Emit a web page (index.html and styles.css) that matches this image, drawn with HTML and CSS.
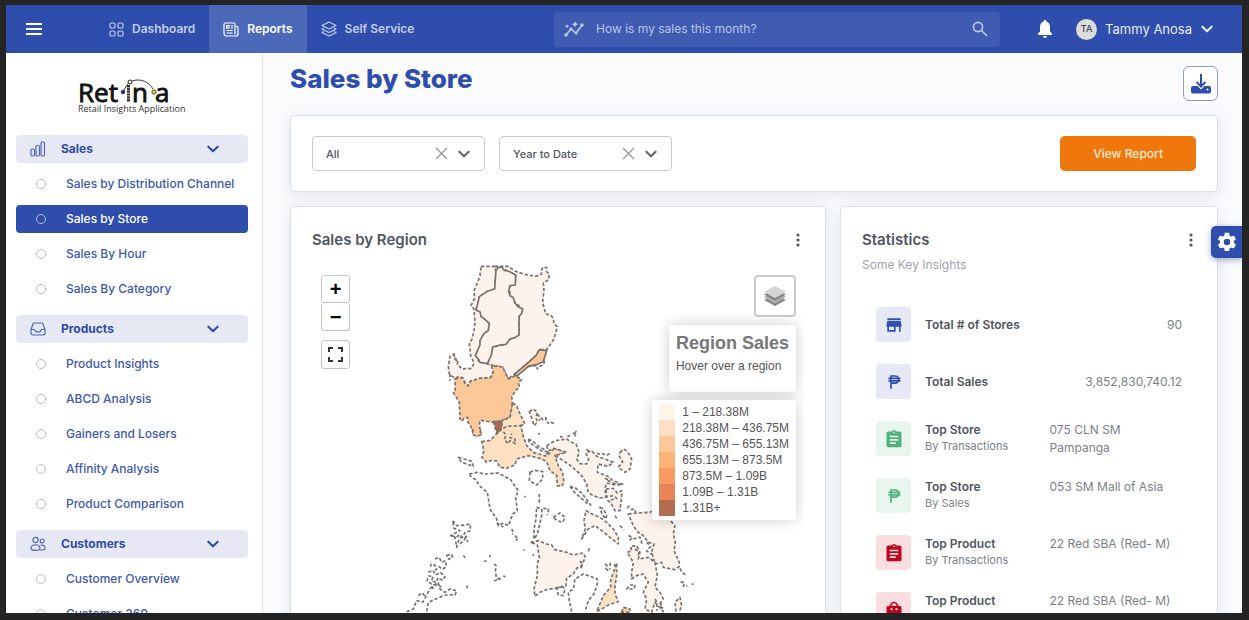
FILE: index.html
```html
<!DOCTYPE html>
<html lang="en">
<head>
<meta charset="utf-8">
<meta name="viewport" content="width=device-width, initial-scale=1">
<title>Retina - Sales by Store</title>
<link rel="stylesheet" href="styles.css">
</head>
<body>
<svg class="defs" aria-hidden="true">
  <symbol id="chev" viewBox="0 0 12 12"><path d="M2 4l4 4 4-4" fill="none" stroke="currentColor" stroke-width="1.8" stroke-linecap="round" stroke-linejoin="round"/></symbol>
  <symbol id="peso" viewBox="0 0 24 24"><path d="M8 21V4h5.500a4.800 4.800 0 0 1 0 9.600H8M4.500 7.300h16M4.500 10.500h16" fill="none" stroke="currentColor" stroke-width="2.300"/></symbol>
  <symbol id="clip" viewBox="0 0 24 24"><path fill="currentColor" d="M19 3h-4.200a3 3 0 0 0-5.600 0H5a2 2 0 0 0-2 2v15a2 2 0 0 0 2 2h14a2 2 0 0 0 2-2V5a2 2 0 0 0-2-2zm-7 0a1 1 0 1 1 0 2 1 1 0 0 1 0-2zm2 15H7v-2h7zm3-4H7v-2h10zm0-4H7V8h10z"/></symbol>
  <symbol id="dots" viewBox="0 0 6 16"><g fill="currentColor"><circle cx="3" cy="3" r="1.600"/><circle cx="3" cy="8" r="1.600"/><circle cx="3" cy="13" r="1.600"/></g></symbol>
</svg>
<div class="app">
  <header class="topbar">
    <button class="icon-btn burger" aria-label="Toggle menu"><svg width="16" height="12" viewBox="0 0 16 12"><path d="M0 1h16M0 6h16M0 11h16" stroke="currentColor" stroke-width="1.800"/></svg></button>
    <nav class="tabs">
      <a class="tab" href="#"><svg width="15" height="15" viewBox="0 0 15 15" fill="none" stroke="currentColor" stroke-width="1.200"><rect x="1" y="1" width="5" height="5" rx="1.600"/><rect x="9" y="1" width="5" height="5" rx="1.600"/><rect x="1" y="9" width="5" height="5" rx="1.600"/><rect x="9" y="9" width="5" height="5" rx="1.600"/></svg>Dashboard</a>
      <a class="tab active" href="#"><svg width="16" height="15" viewBox="0 0 16 15" fill="none" stroke="currentColor" stroke-width="1.200"><path d="M12 12.500V2.500a1.500 1.500 0 0 0-1.500-1.500h-8A1.500 1.500 0 0 0 1 2.500v9A2.500 2.500 0 0 0 3.500 14H13a2 2 0 0 0 2-2V5.500a1 1 0 0 0-1-1h-2M3.500 8.500h6M3.500 11h6M8 3.800h2M8 6h2"/><rect x="3.600" y="3.600" width="2.400" height="2.400"/></svg>Reports</a>
      <a class="tab" href="#"><svg width="16" height="16" viewBox="0 0 16 16" fill="none" stroke="currentColor" stroke-width="1.200" stroke-linejoin="round"><path d="M8 1l7 3.500L8 8 1 4.500zM3 7L1 8l7 3.500L15 8l-2-1M3 10.500l-2 1L8 15l7-3.500-2-1"/></svg>Self Service</a>
    </nav>
    <form class="search" role="search">
      <svg width="20" height="16" viewBox="0 0 20 16" fill="none" stroke="currentColor" stroke-width="1.600"><path d="M2 14l5-6 5 4 6-8"/><g fill="currentColor" stroke="none"><circle cx="2" cy="14" r="1.700"/><circle cx="7" cy="8" r="1.600"/><circle cx="12" cy="12" r="1.600"/><circle cx="18" cy="4" r="1.700"/><path d="M11 0l1 2.300 2.300 1-2.300 1-1 2.300-1-2.300-2.300-1 2.300-1zM3 3l.7 1.500 1.500.7-1.500.7L3 7.400l-.7-1.500-1.500-.7 1.500-.7z"/></g></svg>
      <input type="text" aria-label="Search" placeholder="How is my sales this month?">
      <button class="icon-btn" type="button" aria-label="Search"><svg width="16" height="16" viewBox="0 0 16 16" fill="none" stroke="currentColor" stroke-width="1.600"><circle cx="6" cy="6" r="4.600"/><path d="M9.500 9.500L15 15"/></svg></button>
    </form>
    <div class="account">
      <button class="icon-btn bell" aria-label="Notifications"><svg width="16" height="18" viewBox="0 0 16 18" fill="currentColor"><path d="M8 0a1.400 1.400 0 0 1 1.400 1.600C11.700 2.300 13 4.300 13 7v4.500l2 2V15H1v-1.500l2-2V7c0-2.700 1.300-4.700 3.600-5.400A1.400 1.400 0 0 1 8 0zM6 16h4a2 2 0 0 1-4 0z"/></svg></button>
      <button class="user"><span class="avatar">TA</span>Tammy Anosa<svg width="14" height="14"><use href="#chev"/></svg></button>
    </div>
  </header>

  <div class="body">
    <aside class="sidebar">
      <a class="logo" href="#" aria-label="Retina"><svg width="114" height="38" viewBox="0 0 114 38">
        <text class="logo-name" x="0" y="24">Ret</text><text class="logo-name" x="54" y="24">n</text><text class="logo-name" x="77" y="24">a</text>
        <path d="M50.500 7v17" stroke="#333" stroke-width="3" stroke-dasharray="2.200 .6"/>
        <path d="M45 13l5-7M54 3c9-3 17 1 21 8" fill="none" stroke="#333"/><circle cx="52" cy="4" r="2" fill="#fff" stroke="#222"/>
        <circle cx="45" cy="14" r="2.300" fill="#3b3178"/><circle cx="76" cy="14" r="2.200" fill="#e0c132" stroke="#333" stroke-width=".8"/>
        <text class="logo-sub" x="0" y="34">Retail Insights Application</text></svg></a>
      <nav class="menu">
        <section class="group">
          <button class="group-head"><svg width="16" height="16" viewBox="0 0 16 16" fill="none" stroke="currentColor" stroke-width="1.200"><rect x="1" y="8" width="3.500" height="7" rx="1.200"/><rect x="6" y="4.500" width="3.500" height="10.500" rx="1.200"/><rect x="11" y="1" width="3.500" height="14" rx="1.200"/></svg><span>Sales</span><svg width="14" height="14"><use href="#chev"/></svg></button>
          <a class="item" href="#">Sales by Distribution Channel</a>
          <a class="item active" href="#">Sales by Store</a>
          <a class="item" href="#">Sales By Hour</a>
          <a class="item" href="#">Sales By Category</a>
        </section>
        <section class="group">
          <button class="group-head"><svg width="16" height="16" viewBox="0 0 16 16" fill="none" stroke="currentColor" stroke-width="1.200" stroke-linejoin="round"><path d="M1 8.500L3 3a1.500 1.500 0 0 1 1.400-1h7.200A1.500 1.500 0 0 1 13 3l2 5.500V12a2 2 0 0 1-2 2H3a2 2 0 0 1-2-2zh3.500l1.500 2.300h4l1.500-2.300H15"/></svg><span>Products</span><svg width="14" height="14"><use href="#chev"/></svg></button>
          <a class="item" href="#">Product Insights</a>
          <a class="item" href="#">ABCD Analysis</a>
          <a class="item" href="#">Gainers and Losers</a>
          <a class="item" href="#">Affinity Analysis</a>
          <a class="item" href="#">Product Comparison</a>
        </section>
        <section class="group">
          <button class="group-head"><svg width="16" height="16" viewBox="0 0 16 16" fill="none" stroke="currentColor" stroke-width="1.200"><circle cx="5.500" cy="4" r="2.700"/><circle cx="12.200" cy="5" r="2"/><path d="M1 12.500c0-5 9-5 9 0 0 2.500-9 2.500-9 0zM10.500 9.300c2.200-.8 4.700.4 4.700 3 0 1.500-3 2-5 1.500"/></svg><span>Customers</span><svg width="14" height="14"><use href="#chev"/></svg></button>
          <a class="item" href="#">Customer Overview</a>
          <a class="item" href="#">Customer 360</a>
        </section>
      </nav>
    </aside>

    <main class="main">
      <div class="title-row">
        <h1>Sales by Store</h1>
        <button class="download" aria-label="Download"><svg width="22" height="22" viewBox="0 0 22 22"><path fill="currentColor" d="M3 13h4.500l3.500 3.500 3.500-3.500H19a2 2 0 0 1 2 2v3.500a2 2 0 0 1-2 2H3a2 2 0 0 1-2-2V15a2 2 0 0 1 2-2z"/><path d="M11 1v12M6.500 9l4.500 4.500L15.500 9" fill="none" stroke="currentColor" stroke-width="2"/><circle cx="17.500" cy="16.500" r="1" fill="#fff"/></svg></button>
      </div>
      <form class="card filters">
        <div class="field"><select aria-label="Store"><option>All</option></select><button type="button" class="clear" aria-label="Clear store"><svg width="13" height="13" viewBox="0 0 13 13"><path d="M1 1l11 11M12 1L1 12" stroke="currentColor" stroke-width="1.400"/></svg></button><svg class="caret" width="14" height="14"><use href="#chev"/></svg></div>
        <div class="field"><select aria-label="Period"><option>Year to Date</option></select><button type="button" class="clear" aria-label="Clear period"><svg width="13" height="13" viewBox="0 0 13 13"><path d="M1 1l11 11M12 1L1 12" stroke="currentColor" stroke-width="1.400"/></svg></button><svg class="caret" width="14" height="14"><use href="#chev"/></svg></div>
        <button type="button" class="primary">View Report</button>
      </form>
      <div class="panels">
        <section class="card region">
          <div class="card-head"><h2>Sales by Region</h2><button class="icon-btn" aria-label="Region options"><svg width="6" height="16"><use href="#dots"/></svg></button></div>
          <div class="map">
            <svg class="land" width="492" height="354" viewBox="312 266 492 354" role="img" aria-label="Map of sales by region">
              <g transform="translate(400 260) scale(.3333)">
                <path class="c1" d="M243 22L284 22 288 40 284 90 262 97 238 113 233 135 228 153 240 158 243 172 254 180 268 193 265 215 252 224 243 240 240 258 228 288 235 305 262 314 275 318 280 340 272 356 240 358 225 366 212 366 204 381 196 374 190 358 175 353 165 358 148 345 145 322 150 292 162 285 165 300 174 306 172 316 186 330 215 328 222 312 212 290 208 255 216 240 222 215 225 190 222 150 213 140 224 118 222 95 232 72 240 50Z"/>
                <path class="c1" d="M284 22L325 22 345 36 370 45 408 52 425 45 423 35 430 24 440 26 440 38 448 45 446 62 430 72 432 95 428 130 437 165 452 168 460 178 462 195 472 203 462 240 440 272 418 272 408 290 380 315 350 340 325 360 315 340 308 324 280 320 262 314 278 264 318 256 330 240 357 228 358 168 368 150 345 130 330 108 328 82 346 75 347 48 318 34Z"/>
                <g class="solid">
                  <path class="c1" d="M288 35L296 25 305 24 313 34 325 36 347 48 346 78 330 80 326 96 330 110 340 116 345 132 354 143 368 150 364 165 357 172 357 228 345 236 330 240 318 256 300 258 278 264 274 288 262 314 240 310 235 300 226 290 240 258 240 244 252 224 265 215 268 193 254 180 243 172 240 158 228 153 233 135 238 113 262 97 284 90Z"/>
                  <path class="c3" d="M418 272L440 275 430 308 412 316 385 322 350 352 345 345 380 315 408 290Z"/>
                </g>
                <path d="M434 305L430 318 420 322 412 330 412 320 385 322M150 345L150 365M160 284L168 300 172 312" fill="none"/>
                <path class="c3" d="M165 360L185 355 196 374 204 381 212 366 240 358 272 356 280 340 275 320 308 324 315 340 325 360 345 350 365 362 355 370 358 382 335 412 338 440 330 475 305 485 280 490 240 484 238 500 243 525 230 530 219 522 212 500 203 488 203 475 192 478 185 487 180 480 178 430 160 400 166 392Z"/>
                <path class="c2" d="M338 432L350 440 358 460 375 495 362 500 368 540 362 550 320 535 300 522 306 486 330 475Z"/>
                <path class="c7" d="M280 488L306 486 306 500 300 512 302 532 291 538 290 520Z"/>
                <path class="c1" d="M388 458L400 450 412 460 408 475 412 490 402 500 396 480Z"/>
                <path fill="none" d="M412 466l8 8-2 12m5-10l9 10m5-12l2 14 8 6m5-4l12 4m-50 30l6 1m60 8l8 2m14-2l8-3m15-6l4-8m-4 12l2 4"/>
              </g>
              <g transform="translate(400 430) scale(.3333)">
                <path class="c2" d="M245 38L270 34 285 20 300 2 322 -8 362 -10 370 22 380 50 400 70 440 82 462 58 480 62 500 70 480 76 465 80 475 110 488 130 492 160 485 172 472 170 470 140 450 125 440 98 420 88 385 80 350 90 345 108 320 118 300 115 290 96 275 94 260 100 246 85 252 65Z"/>
                <path class="c0" d="M310 8L318 18 313 32 325 44 330 35 346 44 345 30 330 26 335 14"/>
                <path class="c3" d="M218 0L220 18 230 22 242 18 241 0"/>
                <path class="c7" d="M286 0L304 0 300 8 292 12Z"/>
                <path class="c1" d="M440 50L465 35 500 30 515 40 528 45 538 70 530 90 540 104 560 105 566 90 557 72 575 65 590 82 615 90 640 100 625 112 595 105 592 130 620 140 640 155 668 166 645 168 620 162 615 180 618 205 600 207 580 200 565 190 560 165 545 140 515 112 490 95 465 80 500 70 462 58 445 66Z"/>
                <path class="c1" d="M660 70L672 60 684 70 695 90 690 120 675 130 655 115 668 98 658 82Z"/>
                <path class="c1" d="M618 180L640 178 652 192 665 185 665 205 660 245 645 245 635 226 624 215 650 208 640 200 620 204Z"/>
                <path class="c0" d="M208 135L230 130 255 135 295 132 312 142 330 150 355 185 347 205 352 245 338 255 325 290 310 282 295 290 290 270 270 240 262 190 240 172 225 150 215 146Z"/>
                <path class="c0" d="M390 130L405 124 428 128 428 150 410 168 388 155Z"/>
                <path class="c0" d="M175 85L192 90 215 97 220 112 200 105 185 100Z"/>
                <path class="c0" d="M510 172L525 176 545 192 572 228 560 222 545 208 525 192Z"/>
                <path class="c1" d="M558 245L576 255 600 265 620 280 640 300 655 325 655 345 630 325 612 310 585 290 565 300 545 330 556 300 552 275Z"/>
                <path class="c0" d="M600 235L610 240 620 260 618 270 606 256Z"/>
                <path class="c0" d="M460 265L480 252 495 265 488 280 472 275Z"/>
                <path class="c0" d="M410 235L425 240 426 255 418 290 412 316 402 330 402 300 408 270Z"/>
                <path class="c0" d="M385 30L400 38 415 52 435 62 440 68 425 66 405 52 388 40Z"/>
                <path class="c1" d="M392 340L415 335 440 345 455 348 465 362 500 370 520 378 550 372 556 385 545 410 530 418 520 435 500 448 498 470 480 475 440 482 420 490 405 502 402 480 412 440 412 405 418 385 412 348Z"/>
                <path class="c0" d="M470 478L485 472 495 480 490 500 475 498Z"/>
                <path class="c0" d="M515 548L508 515 505 490 520 480 525 450 550 435 570 442 592 450 592 465 582 495 565 515 555 548"/>
                <path class="c2" d="M650 405L640 430 632 455 632 475 610 500 590 548 605 540 625 528 655 518 645 495 645 470 650 440Z"/>
                <path class="c3" d="M665 550L670 535 690 540 690 550Z"/>
                <path class="c1" d="M685 255L710 252 750 250 770 240 800 262 825 290 820 315 826 340 822 365 838 400 838 412 825 422 790 415 785 400 765 405 755 370 762 345 745 340 728 318 712 308 700 290Z"/>
                <path class="c1" d="M682 370L695 366 692 352 710 350 720 370 715 390 745 385 765 400 772 440 765 475 780 490 790 510 780 525 790 548 765 520 755 550 735 540 740 510 730 490 745 460 730 435 710 440 695 450 695 430 700 400Z"/>
                <path class="c1" d="M828 548L825 520 840 505 845 530 838 548"/>
                <path class="c0" d="M20 548L40 540 50 515 68 520 90 480 100 468 115 462 120 480 135 490 150 480 170 485 165 498 145 497 130 500 85 520 80 548"/>
                <path class="c0" d="M158 275L170 290 195 288 210 285 212 305 195 310 190 322 178 328 170 355 165 325 152 320 180 305 162 298Z"/>
                <path fill="none" d="M155 320l14 5 10-8 12 12 15-12M180 345l18-18 6 12M140 380l14-5 4 10-12 6zM105 390l12-5 8 15 12-5 2 18-12 8-10-8-9 10-4-16-12 4 2-14M85 430l14-6 8 14 14-8 14 14-8 10-13-8-5 14-14-4 4-14-14-1-4 15 12 8 5 14 12-12 14 8M55 500l12-8 8 10M190 380l6 6M252 396l8 1M270 378l0 7M282 405l6 4-2 20 4 18 12 6M282 456l20-8M310 440l6 4M200 470l3 8M373 202l4 2M418 195l0 30M430 238l16 2-4 18M335 300l6 12-4 4M345 320l10 10-8 4M370 362l4 2M398 376l4 4M290 282l20 12M520 10l4 8M445 68l-8 10M540 396l8 10-6 14M568 358l-4 14M615 405l8 6-6 10m14-20l-2 20m14-16l4 10m-30 4l8 6M600 76l-14-5m20 2l14 6 12-8M560 60l10 12M615 148l16 8m-8-2l20 10 24 4M688 230l-10 12m14 0l12-2 3 10M645 260l10 14M660 290l12 12M685 320l12 4-10 14M700 330l20-6 6 20M705 360l12 8-2 12M740 340l12 12-12 14 16 10M680 480l10-12 16 0-4 12zM842 458l12 4-4 10 12-2M875 465l6 1M840 418l6 12 12 8M765 510l6 10 0 25M780 520l8 18"/>
              </g>
            </svg>
            <div class="zoom-tools">
              <div class="zoom-pair"><button aria-label="Zoom in">+</button><button aria-label="Zoom out">−</button></div>
              <button class="full" aria-label="Full screen"><svg width="15" height="15" viewBox="0 0 15 15"><path d="M1 5V1h4M10 1h4v4M14 10v4h-4M5 14H1v-4" fill="none" stroke="#333" stroke-width="2"/></svg></button>
            </div>
            <div class="overlays">
              <button class="layers" aria-label="Layers"><svg width="26" height="24" viewBox="0 0 26 24"><path d="M2 16l11 6 11-6-3-1.500-8 4.500-8-4.500z" fill="#888"/><path d="M2 13l11 6 11-6-3-1.500-8 4.500-8-4.500z" fill="#aaa"/><path d="M2 10.500l11 6 11-6-3-1.500-8 4.500L5 9z" fill="#858585"/><path d="M2 8l11-6 11 6-11 6z" fill="#d4d4d4"/></svg></button>
              <div class="info"><h3>Region Sales</h3><p>Hover over a region</p></div>
              <ul class="legend">
                <li><i class="k1"></i>1 – 218.38M</li><li><i class="k2"></i>218.38M – 436.75M</li><li><i class="k3"></i>436.75M – 655.13M</li><li><i class="k4"></i>655.13M – 873.5M</li><li><i class="k5"></i>873.5M – 1.09B</li><li><i class="k6"></i>1.09B – 1.31B</li><li><i class="k7"></i>1.31B+</li>
              </ul>
            </div>
          </div>
        </section>
        <section class="card stats">
          <div class="card-head"><h2>Statistics</h2><button class="icon-btn" aria-label="Statistics options"><svg width="6" height="16"><use href="#dots"/></svg></button></div>
          <p class="sub">Some Key Insights</p>
          <ul class="rows">
            <li><span class="tile blue"><svg width="20" height="20" viewBox="0 0 24 24"><path fill="currentColor" d="M4 4h16v2H4zm0 3h16l1 5v2h-1v6h-2v-6h-4v6H4v-6H3v-2zm2 7v4h6v-4z"/></svg></span><span class="name single"><b>Total # of Stores</b></span><span class="num">90</span></li>
            <li><span class="tile blue"><svg width="18" height="18"><use href="#peso"/></svg></span><span class="name single"><b>Total Sales</b></span><span class="num">3,852,830,740.12</span></li>
            <li><span class="tile green"><svg width="20" height="20"><use href="#clip"/></svg></span><span class="name"><b>Top Store</b><small>By Transactions</small></span><span class="val">075 CLN SM Pampanga</span></li>
            <li><span class="tile green"><svg width="18" height="18"><use href="#peso"/></svg></span><span class="name"><b>Top Store</b><small>By Sales</small></span><span class="val">053 SM Mall of Asia</span></li>
            <li><span class="tile red"><svg width="20" height="20"><use href="#clip"/></svg></span><span class="name"><b>Top Product</b><small>By Transactions</small></span><span class="val">22 Red SBA (Red- M)</span></li>
            <li><span class="tile red"><svg width="20" height="20" viewBox="0 0 24 24"><path fill="currentColor" d="M7 7a5 5 0 0 1 10 0h2a2 2 0 0 1 2 2v11a2 2 0 0 1-2 2H5a2 2 0 0 1-2-2V9a2 2 0 0 1 2-2zm2 0h6a3 3 0 0 0-6 0z"/><circle cx="9" cy="11" r="1.300" fill="#f9dde1"/><circle cx="15" cy="11" r="1.300" fill="#f9dde1"/></svg></span><span class="name"><b>Top Product</b></span><span class="val">22 Red SBA (Red- M)</span></li>
          </ul>
        </section>
      </div>
    </main>
  </div>
  <button class="settings" aria-label="Settings"><svg width="22" height="22" viewBox="0 0 24 24"><path fill="currentColor" d="M19.400 13c.1-.3.100-.7.100-1s0-.7-.1-1l2.100-1.600c.2-.2.200-.4.100-.6l-2-3.500c-.1-.2-.4-.3-.6-.2l-2.500 1c-.5-.4-1.100-.7-1.700-1l-.4-2.600c0-.3-.2-.5-.5-.5h-4c-.2 0-.5.200-.5.400L9 5.100c-.6.300-1.200.6-1.700 1l-2.500-1c-.2-.1-.5 0-.6.200l-2 3.500c-.1.200-.1.500.1.600L4.500 11c0 .3-.1.700-.1 1s0 .7.100 1l-2.200 1.600c-.2.200-.2.400-.1.600l2 3.500c.1.200.4.300.6.200l2.500-1c.5.400 1.100.7 1.700 1l.4 2.600c0 .2.200.4.500.4h4c.2 0 .5-.2.500-.4l.4-2.600c.6-.3 1.200-.6 1.700-1l2.500 1c.2.100.5 0 .6-.2l2-3.500c.1-.2.100-.5-.1-.6zM12 15.500a3.500 3.500 0 1 1 0-7 3.500 3.500 0 0 1 0 7z"/></svg></button>
</div>
</body>
</html>
```
FILE: styles.css
```css
* { box-sizing: border-box; }
:root { --blue: #2f4dac; --text: #50565e; --muted: #7b7f86; }
body { margin: 0; padding: 5px 7px 7px 6px; height: 100vh; background: #242424; font: 500 12px/18px Inter, "Liberation Sans", sans-serif; color: var(--text); overflow: hidden; }
button, input, select { font: inherit; color: inherit; }
button { cursor: pointer; border: 0; padding: 0; background: none; }
a { color: inherit; text-decoration: none; }
h1, h2, h3, p, ul { margin: 0; padding: 0; }
ul { list-style: none; }
svg { display: block; flex: none; }
.defs { display: none; }
.app { position: relative; height: 100%; display: flex; flex-direction: column; overflow: hidden; background: #f9fbfd; }
.icon-btn { display: flex; align-items: center; }

.topbar { flex: none; height: 48px; display: flex; align-items: center; background: var(--blue); color: #dde4f8; }
.burger { margin-left: 20px; color: #fff; }
.tabs { display: flex; align-self: stretch; margin-left: 53px; }
.tab { display: flex; align-items: center; gap: 8px; padding: 0 14px; font-weight: 600; color: #c3cdec; }
.tab.active { background: #4c68b9; color: #fff; }
.search { flex: 0 1 446px; display: flex; align-items: center; gap: 12px; height: 35px; margin-left: auto; padding: 0 12px 0 10px; border-radius: 4px; background: #3f5bb2; color: #bfcaea; }
.search input { flex: 1; min-width: 0; border: 0; padding: 0; outline: 0; background: none; font-weight: 400; }
.search input::placeholder { color: #b9c5e9; opacity: 1; }
.account { display: flex; align-items: center; gap: 23px; margin: 0 28px 0 37px; }
.bell { color: #fff; }
.user { display: flex; align-items: center; gap: 8px; font-weight: 400; font-size: 13px; color: #e6ebfa; }
.avatar { display: grid; place-items: center; width: 21px; height: 21px; border-radius: 50%; background: #dcdcdc; color: #444; font-size: 9px; font-weight: 500; }

.body { flex: 1; min-height: 0; display: flex; }
.sidebar { flex: none; width: 257px; padding: 25px 14px 0 10px; border-right: 1px solid #e2e5e9; background: #fff; overflow: hidden; }
.logo { display: block; padding-left: 62px; }
.logo-name { font: 400 26px "Open Sans", sans-serif; fill: #111; stroke: #111; stroke-width: .9px; }
.logo-sub { font: 400 9px "Open Sans", sans-serif; fill: #333; }
.menu { display: flex; flex-direction: column; gap: 12px; margin-top: 19px; color: #3c58ae; }
.group { display: flex; flex-direction: column; gap: 7px; }
.group-head { display: flex; align-items: center; gap: 15px; height: 28px; padding: 0 28px 0 14px; border-radius: 4px; background: #e6e9f4; color: #304ca5; font-weight: 700; text-align: left; }
.group-head span { flex: 1; }
.group-head svg:first-child { color: #5067b5; }
.item { display: flex; align-items: center; height: 28px; padding-left: 20px; gap: 20px; border-radius: 4px; white-space: nowrap; }
.item::before { content: ""; flex: none; width: 8px; height: 8px; border: 1px solid #b9bdcf; border-radius: 50%; }
.item.active { background: var(--blue); color: #fff; }

.main { flex: 1; min-width: 0; display: flex; flex-direction: column; gap: 14px; padding: 13px 24px 0 27px; }
.title-row { display: flex; justify-content: space-between; }
h1 { font-size: 26px; line-height: 26px; font-weight: 800; color: var(--blue); }
.download { display: grid; place-items: center; width: 35px; height: 35px; border: 1px solid #8b9ad0; border-radius: 6px; background: #fff; color: var(--blue); }
.card { background: #fff; border: 1px solid #dde0e4; border-radius: 4px; box-shadow: 0 3px 14px rgba(60, 70, 90, .12); }
.filters { flex: none; display: flex; align-items: center; gap: 14px; padding: 20px 21px; }
.filters .primary { margin-left: auto; padding: 0 33px; height: 35px; border-radius: 5px; background: #f0770b; color: #fdebd8; }
.field { display: grid; grid-template-columns: 1fr auto auto; align-items: center; gap: 9px; width: 173px; height: 35px; padding-right: 13px; border: 1px solid #c9cacc; border-radius: 4px; }
.field > * { grid-row: 1; }
.field select { grid-column: 1 / -1; width: 100%; padding-left: 13px; border: 0; appearance: none; background: none; outline: 0; font-size: 11px; }
.clear { grid-column: 2; color: #9a9a9a; }
.caret { grid-column: 3; color: #666; }

.panels { flex: 1; min-height: 0; display: grid; grid-template-columns: 536fr 378fr; gap: 14px; align-items: start; }
.card-head { display: flex; justify-content: space-between; align-items: center; height: 24px; }
h2 { font-size: 15px; line-height: 24px; font-weight: 600; }
.region { padding: 21px; }
.region .card-head { padding-right: 3px; }
.map { position: relative; margin-top: 13px; overflow: hidden; }
.land { margin: 0 auto; stroke: #77716e; stroke-width: 5; stroke-dasharray: 10 6; stroke-linejoin: round; }
.solid { stroke-dasharray: none; }
.c0 { fill: none; }
.c1 { fill: #fdf2ec; }
.c2 { fill: #fde0c2; }
.c3 { fill: #fdc898; }
.c7 { fill: #ad6650; }
.zoom-tools { position: absolute; left: 9px; top: 10px; display: grid; gap: 9px; }
.zoom-pair { display: grid; }
.zoom-tools button { display: grid; place-items: center; width: 29px; height: 28px; background: #fff; border: 1px solid #c4c4c4; border-radius: 3px; color: #000; font: 700 20px/20px "Liberation Sans", sans-serif; }
.zoom-pair button + button { border-top: 0; }
.zoom-tools .full { height: 29px; }
.overlays { position: absolute; right: 8px; top: 10px; display: flex; flex-direction: column; align-items: flex-end; gap: 8px; font-family: "Liberation Sans", sans-serif; font-weight: 400; color: #555; }
.layers { display: grid; place-items: center; width: 42px; height: 42px; border: 2px solid #ccc; border-radius: 4px; background: #fff; }
.info, .legend { background: rgba(255, 255, 255, .96); border-radius: 4px; box-shadow: 0 0 14px rgba(0, 0, 0, .2); }
.info { padding: 7px; height: 67px; }
.info h3 { font-size: 18px; line-height: 22px; color: #777; }
.info p { margin-top: 3px; }
.legend { padding: 4px 7px; line-height: 16px; }
.legend li { display: flex; gap: 7px; height: 16px; }
.legend i { width: 16px; height: 16px; }
.k1 { background: #fef5ea; }
.k2 { background: #fde0c3; }
.k3 { background: #fdc898; }
.k4 { background: #fcb378; }
.k5 { background: #f79b62; }
.k6 { background: #e8835a; }
.k7 { background: #b46c50; }

.stats { padding: 21px 21px 40px; }
.stats .card-head { padding-right: 2px; }
.sub { margin-top: 4px; color: #a0a4aa; font-weight: 400; }
.rows { display: grid; gap: 22px; padding: 33px 14px 0; }
.rows li { display: flex; height: 35px; }
.tile { display: grid; place-items: center; flex: none; width: 35px; height: 35px; margin-right: 14px; border-radius: 4px; }
.blue { background: #e6e9f5; color: #3250ae; }
.green { background: #e8f6ee; color: #52b17c; }
.red { background: #f9dde1; color: #bd0920; }
.name { flex: 125; line-height: 17px; white-space: nowrap; }
.name.single { align-self: center; }
.name b, .name small { display: block; }
.name b { font-weight: 600; }
.name small { font-size: 11px; font-weight: 400; color: var(--muted); }
.val { flex: 133; font-weight: 400; color: var(--muted); }
.num { align-self: center; font-weight: 400; color: var(--muted); }
.settings { position: absolute; right: 0; top: 221px; display: grid; place-items: center; width: 31px; height: 32px; border-radius: 5px 0 0 5px; background: var(--blue); color: #fff; box-shadow: 0 2px 6px rgba(30, 50, 120, .4); }
```
